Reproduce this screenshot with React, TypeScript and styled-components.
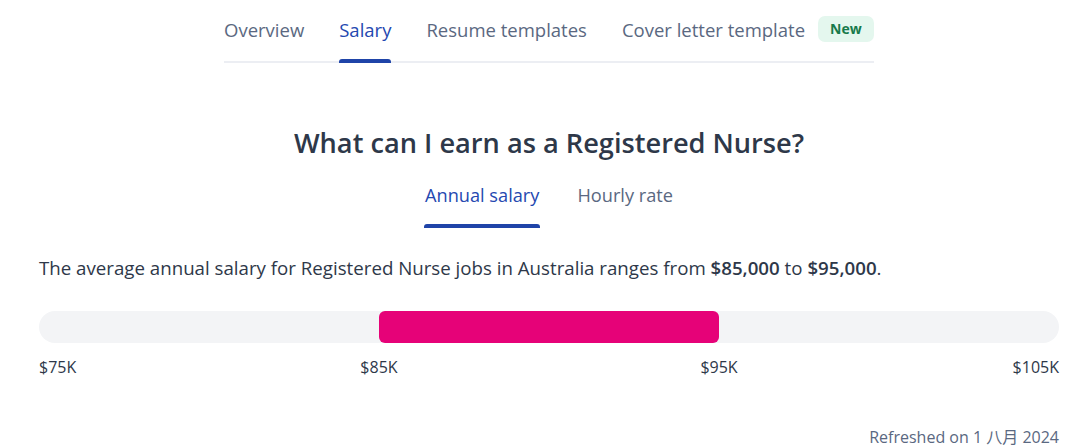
import styled, { createGlobalStyle } from "styled-components";

const GlobalStyle = createGlobalStyle`
  * { box-sizing: border-box; }
  body {
    margin: 0;
    background: #ffffff;
    font-family: "Open Sans", "Noto Sans", "Noto Sans CJK SC", sans-serif;
    color: #2e3849;
  }
`;

const Page = styled.div`
  width: 1080px;
  min-height: 446px;
  padding: 0 21px 0 39px;
  display: flex;
  flex-direction: column;
  align-items: center;
  & > * {
    flex-shrink: 0;
  }
`;

const NavBar = styled.nav`
  width: 650px;
  display: flex;
  align-items: center;
  gap: 35px;
  height: 63px;
  border-bottom: 2px solid #eceef3;
`;

const NavTab = styled.div<{ $active?: boolean }>`
  position: relative;
  height: 100%;
  padding-bottom: 3px;
  display: flex;
  align-items: center;
  flex-shrink: 0;
  white-space: nowrap;
  gap: 13px;
  font-size: 18.5px;
  color: ${(p) => (p.$active ? "#2448b0" : "#5a6881")};
  &::after {
    content: "";
    display: ${(p) => (p.$active ? "block" : "none")};
    position: absolute;
    left: 0;
    right: 0;
    bottom: -2px;
    height: 4px;
    border-radius: 3px 3px 0 0;
    background: #1f44a8;
  }
`;

const Badge = styled.span`
  background: #e4f7ee;
  color: #177a4b;
  font-size: 14px;
  font-weight: 700;
  line-height: 26px;
  padding: 0 12px;
  border-radius: 7px;
`;

const Heading = styled.h2`
  margin: 62px 0 0;
  font-size: 27.2px;
  font-weight: 600;
  color: #2e3849;
  line-height: 36px;
`;

const SubTabs = styled.div`
  display: flex;
  gap: 36px;
  margin-top: 20px;
  height: 47px;
`;

const SubTab = styled.div<{ $active?: boolean }>`
  position: relative;
  font-size: 18.2px;
  line-height: 28px;
  padding: 0 1px;
  color: ${(p) => (p.$active ? "#2448b0" : "#5a6881")};
  &::after {
    content: "";
    display: ${(p) => (p.$active ? "block" : "none")};
    position: absolute;
    left: 0;
    right: 0;
    bottom: 0;
    height: 4px;
    border-radius: 3px 3px 0 0;
    background: #1f44a8;
  }
`;

const Content = styled.div`
  align-self: stretch;
  display: flex;
  flex-direction: column;
`;

const Summary = styled.p`
  margin: 26px 0 0;
  font-size: 18.7px;
  line-height: 28px;
  color: #2e3849;
  b {
    font-weight: 600;
  }
`;

const Track = styled.div`
  margin-top: 29px;
  height: 32px;
  border-radius: 16px;
  background: #f3f4f6;
  position: relative;
`;

const Fill = styled.div`
  position: absolute;
  top: 0;
  bottom: 0;
  background: #e60278;
  border-radius: 6px;
`;

const Scale = styled.div`
  position: relative;
  height: 22px;
  margin-top: 13px;
`;

const Tick = styled.span`
  position: absolute;
  top: 0;
  font-size: 16px;
  font-weight: 500;
  color: #2e3849;
  white-space: nowrap;
`;

const Refreshed = styled.div`
  margin-top: 52px;
  line-height: 14px;
  text-align: right;
  font-size: 16px;
  color: #5a6881;
`;

const ticks = [
  { label: "$75K", pos: 0, shift: "0" },
  { label: "$85K", pos: 33.33, shift: "-50%" },
  { label: "$95K", pos: 66.67, shift: "-50%" },
  { label: "$105K", pos: 100, shift: "-100%" },
];

export default function App() {
  return (
    <>
      <GlobalStyle />
      <Page>
        <NavBar>
          <NavTab>Overview</NavTab>
          <NavTab $active>Salary</NavTab>
          <NavTab>Resume templates</NavTab>
          <NavTab>
            Cover letter template <Badge>New</Badge>
          </NavTab>
        </NavBar>
        <Heading>What can I earn as a Registered Nurse?</Heading>
        <SubTabs>
          <SubTab $active>Annual salary</SubTab>
          <SubTab>Hourly rate</SubTab>
        </SubTabs>
        <Content>
          <Summary>
            The average annual salary for Registered Nurse jobs in Australia ranges from{" "}
            <b>$85,000</b> to <b>$95,000</b>.
          </Summary>
          <Track>
            <Fill style={{ left: "33.33%", width: "33.34%" }} />
          </Track>
          <Scale>
            {ticks.map((t) => (
              <Tick key={t.label} style={{ left: `${t.pos}%`, transform: `translateX(${t.shift})` }}>
                {t.label}
              </Tick>
            ))}
          </Scale>
          <Refreshed>Refreshed on 1 八月 2024</Refreshed>
        </Content>
      </Page>
    </>
  );
}
